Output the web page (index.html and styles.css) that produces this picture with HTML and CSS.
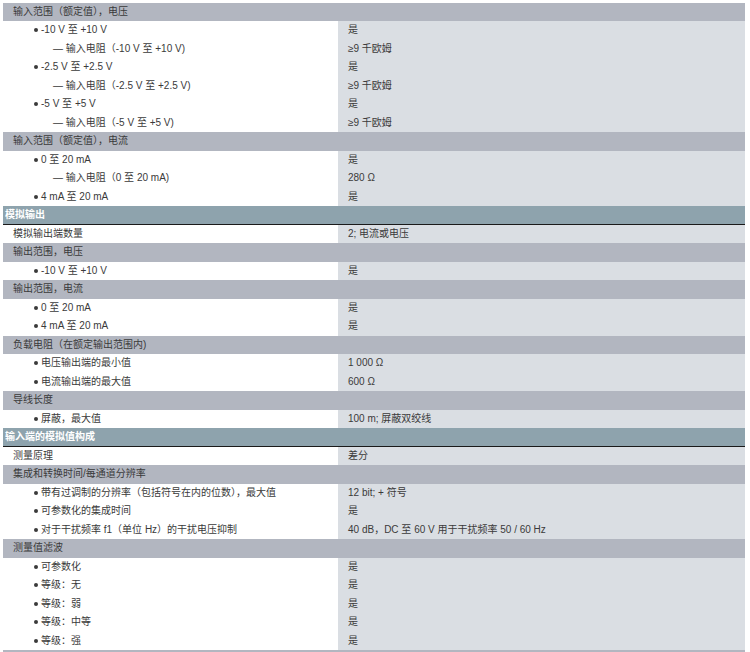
FILE: index.html
```html
<!DOCTYPE html>
<html lang="zh">
<head>
<meta charset="utf-8">
<link rel="stylesheet" href="styles.css">
</head>
<body>
<div class="table">
  <div class="row grp">输入范围（额定值），电压</div>
  <div class="row"><div class="l b">-10 V 至 +10 V</div><div class="r">是</div></div>
  <div class="row"><div class="l d">— 输入电阻（-10 V 至 +10 V)</div><div class="r">≥9 千欧姆</div></div>
  <div class="row"><div class="l b">-2.5 V 至 +2.5 V</div><div class="r">是</div></div>
  <div class="row"><div class="l d">— 输入电阻（-2.5 V 至 +2.5 V)</div><div class="r">≥9 千欧姆</div></div>
  <div class="row"><div class="l b">-5 V 至 +5 V</div><div class="r">是</div></div>
  <div class="row"><div class="l d">— 输入电阻（-5 V 至 +5 V)</div><div class="r">≥9 千欧姆</div></div>
  <div class="row grp">输入范围（额定值），电流</div>
  <div class="row"><div class="l b">0 至 20 mA</div><div class="r">是</div></div>
  <div class="row"><div class="l d">— 输入电阻（0 至 20 mA)</div><div class="r">280 Ω</div></div>
  <div class="row"><div class="l b">4 mA 至 20 mA</div><div class="r">是</div></div>
  <div class="row sec">模拟输出</div>
  <div class="row"><div class="l p">模拟输出端数量</div><div class="r">2; 电流或电压</div></div>
  <div class="row grp">输出范围，电压</div>
  <div class="row"><div class="l b">-10 V 至 +10 V</div><div class="r">是</div></div>
  <div class="row grp">输出范围，电流</div>
  <div class="row"><div class="l b">0 至 20 mA</div><div class="r">是</div></div>
  <div class="row"><div class="l b">4 mA 至 20 mA</div><div class="r">是</div></div>
  <div class="row grp">负载电阻（在额定输出范围内)</div>
  <div class="row"><div class="l b">电压输出端的最小值</div><div class="r">1 000 Ω</div></div>
  <div class="row"><div class="l b">电流输出端的最大值</div><div class="r">600 Ω</div></div>
  <div class="row grp">导线长度</div>
  <div class="row"><div class="l b">屏蔽，最大值</div><div class="r">100 m; 屏蔽双绞线</div></div>
  <div class="row sec">输入端的模拟值构成</div>
  <div class="row"><div class="l p">测量原理</div><div class="r">差分</div></div>
  <div class="row grp">集成和转换时间/每通道分辨率</div>
  <div class="row"><div class="l b">带有过调制的分辨率（包括符号在内的位数），最大值</div><div class="r">12 bit; + 符号</div></div>
  <div class="row"><div class="l b">可参数化的集成时间</div><div class="r">是</div></div>
  <div class="row"><div class="l b">对于干扰频率 f1（单位 Hz）的干扰电压抑制</div><div class="r">40 dB，DC 至 60 V 用于干扰频率 50 / 60 Hz</div></div>
  <div class="row grp">测量值滤波</div>
  <div class="row"><div class="l b">可参数化</div><div class="r">是</div></div>
  <div class="row"><div class="l b">等级：无</div><div class="r">是</div></div>
  <div class="row"><div class="l b">等级：弱</div><div class="r">是</div></div>
  <div class="row"><div class="l b">等级：中等</div><div class="r">是</div></div>
  <div class="row"><div class="l b">等级：强</div><div class="r">是</div></div>
  <div class="row grp"></div>
</div>
</body>
</html>
```
FILE: styles.css
```css
*, *::before, *::after {
  box-sizing: border-box;
}
html, body {
  margin: 0;
  padding: 0;
  background: #ffffff;
}
body {
  font-family: "Liberation Sans", Arial, "Noto Sans CJK SC", sans-serif;
  font-size: 10px;
  color: #3a3a3a;
  overflow: hidden;
}
.table {
  width: 742px;
  margin: 2.5px 0 0 3px;
  display: flex;
  flex-direction: column;
}
.row {
  height: 18.5px;
  display: flex;
  align-items: center;
  line-height: 18.5px;
  white-space: nowrap;
  flex: none;
}
.grp {
  background: #b2b6c0;
  padding-left: 10px;
  color: #3a3a3a;
}
.sec {
  background: #8ea3ad;
  color: #ffffff;
  font-weight: bold;
  padding-left: 2px;
  border-bottom: 1px solid #1a1a1a;
}
.l {
  width: 335px;
  flex: none;
  height: 100%;
  display: flex;
  align-items: center;
  background: #ffffff;
}
.r {
  flex: 1;
  min-width: 0;
  height: 100%;
  background: #dadee3;
  padding-left: 10px;
}
.p {
  padding-left: 10px;
}
.b {
  padding-left: 31px;
}
.b::before {
  content: "";
  width: 4px;
  height: 4px;
  border-radius: 50%;
  background: #3a3a3a;
  margin-right: 3px;
  flex: none;
}
.d {
  padding-left: 50px;
}
```
